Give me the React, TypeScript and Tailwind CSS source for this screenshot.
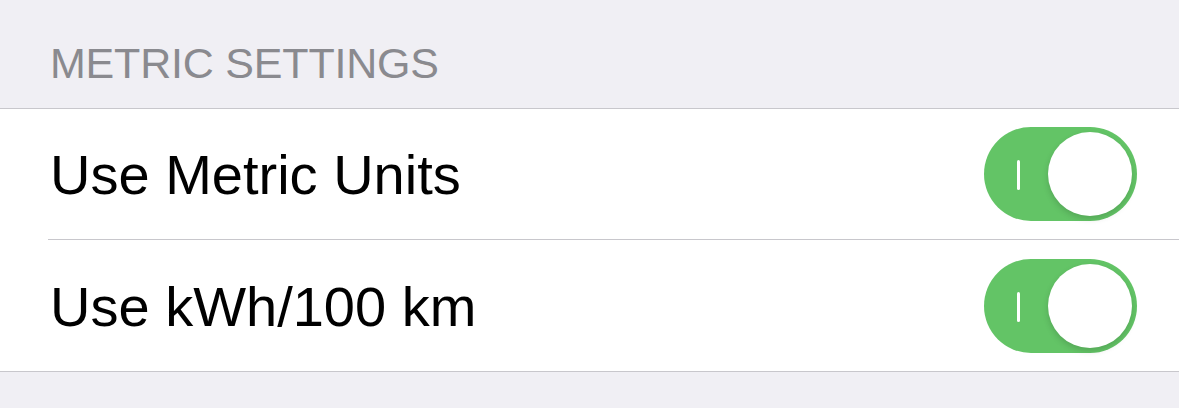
const rows = ['Use Metric Units', 'Use kWh/100 km']

function Toggle() {
  return (
    <div className="relative w-[153px] h-[94px] rounded-full bg-[#63c466] shrink-0">
      <div className="absolute left-[33px] top-[33px] w-[3px] h-[30px] bg-white rounded-sm" />
      <div className="absolute right-[5px] top-[5px] w-[84px] h-[84px] rounded-full bg-white shadow-[0_3px_6px_rgba(0,0,0,0.15)]" />
    </div>
  )
}

export default function App() {
  return (
    <div className="w-[1179px] h-[408px] bg-[#f0eff4] font-['Liberation_Sans',Arial,sans-serif]">
      <div className="h-[108px] flex items-end pb-[23px] pl-[50px]">
        <h2 className="text-[43px] leading-none text-[#8a8a8f] tracking-[-0.2px]">METRIC SETTINGS</h2>
      </div>
      <div className="bg-white border-y border-[#c8c7cc]">
        {rows.map((label, i) => (
          <div key={label} className="pl-[48px]">
            <div className={`h-[131px] flex items-center justify-between pr-[42px] ${i === 0 ? 'border-b border-[#c8c7cc]' : ''}`}>
              <span className="pl-[2px] pt-[2px] text-[56px] leading-none text-black">{label}</span>
              <Toggle />
            </div>
          </div>
        ))}
      </div>
    </div>
  )
}
